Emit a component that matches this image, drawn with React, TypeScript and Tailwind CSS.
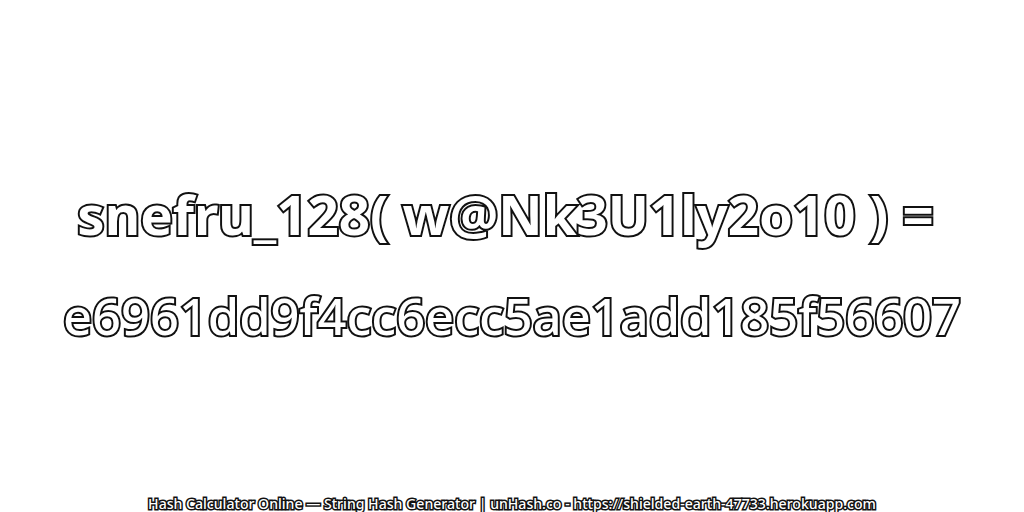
export default function App() {
  return (
    <div className="w-[1024px] h-[512px] bg-white flex flex-col items-center overflow-hidden font-['Noto_Sans','Open_Sans',sans-serif]">
      <div className="mt-[182px] h-[64px] pr-[13px] flex items-center text-[54.6px] font-bold leading-none whitespace-nowrap text-white [-webkit-text-stroke:4px_#111] [paint-order:stroke_fill]">snefru_128( w@Nk3U1ly2o10 ) =</div>
      <div className="mt-[38px] h-[64px] flex items-center text-[50.6px] font-medium leading-none whitespace-nowrap text-white [-webkit-text-stroke:4px_#111] [paint-order:stroke_fill]">e6961dd9f4cc6ecc5ae1add185f56607</div>
      <div className="mt-auto h-[16px] flex items-center text-[14.1px] font-medium whitespace-nowrap text-white [-webkit-text-stroke:3px_#111] [paint-order:stroke_fill]">Hash Calculator Online — String Hash Generator | unHash.co - https://shielded-earth-47733.herokuapp.com</div>
    </div>
  );
}
